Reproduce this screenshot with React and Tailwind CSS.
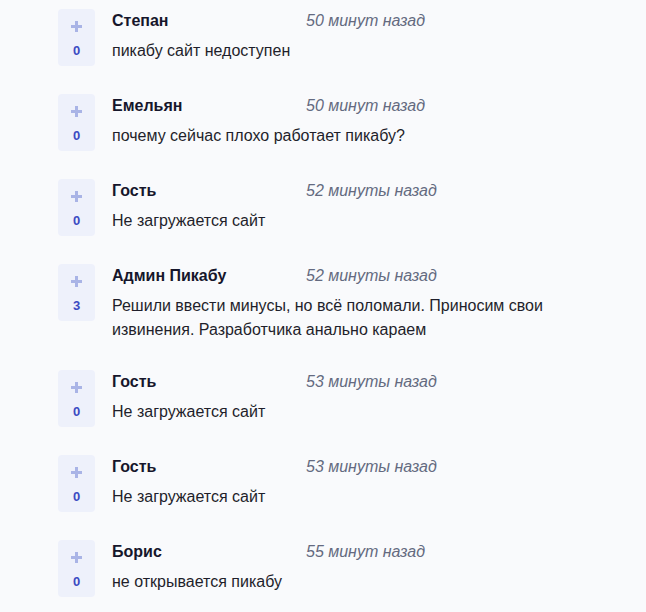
import React from 'react';

const comments = [
  { name: 'Степан', time: '50 минут назад', text: 'пикабу сайт недоступен', votes: 0 },
  { name: 'Емельян', time: '50 минут назад', text: 'почему сейчас плохо работает пикабу?', votes: 0 },
  { name: 'Гость', time: '52 минуты назад', text: 'Не загружается сайт', votes: 0 },
  {
    name: 'Админ Пикабу',
    time: '52 минуты назад',
    text: 'Решили ввести минусы, но всё поломали. Приносим свои извинения. Разработчика анально караем',
    votes: 3
  },
  { name: 'Гость', time: '53 минуты назад', text: 'Не загружается сайт', votes: 0 },
  { name: 'Гость', time: '53 минуты назад', text: 'Не загружается сайт', votes: 0 },
  { name: 'Борис', time: '55 минут назад', text: 'не открывается пикабу', votes: 0 }
];

const VoteBox = ({ votes }) => (
  <div className="w-[37px] h-[57px] shrink-0 rounded-[4px] bg-[#eef1fb] flex flex-col items-center pt-[12px]">
    <svg width="11" height="11" viewBox="0 0 11 11">
      <rect x="4" y="0" width="3" height="11" fill="#a9b4e6" />
      <rect x="0" y="4" width="11" height="3" fill="#a9b4e6" />
    </svg>
    <span className="mt-[12px] text-[13px] leading-[14px] font-bold text-[#3b4bc2]">{votes}</span>
  </div>
);

const App = () => {
  return (
    <div
      className="min-h-[612px] w-full bg-[#f9fafc] pt-[9px] pl-[58px] pr-[40px]"
      style={{ fontFamily: '"Liberation Sans", Arial, sans-serif' }}
    >
      <div className="flex flex-col gap-[28px]">
        {comments.map((c, i) => (
          <div key={i} className="flex gap-[17px]">
            <VoteBox votes={c.votes} />
            <div className="pt-[2px] w-[450px]">
              <div className="flex h-[20px] items-center">
                <span className="w-[194px] text-[16px] font-bold text-[#16162b]">{c.name}</span>
                <span className="text-[16px] italic text-[#646a80]">{c.time}</span>
              </div>
              <p className="mt-[8px] text-[16px] leading-[24px] text-[#1f1f2b]">{c.text}</p>
            </div>
          </div>
        ))}
      </div>
    </div>
  );
};

export default App;
